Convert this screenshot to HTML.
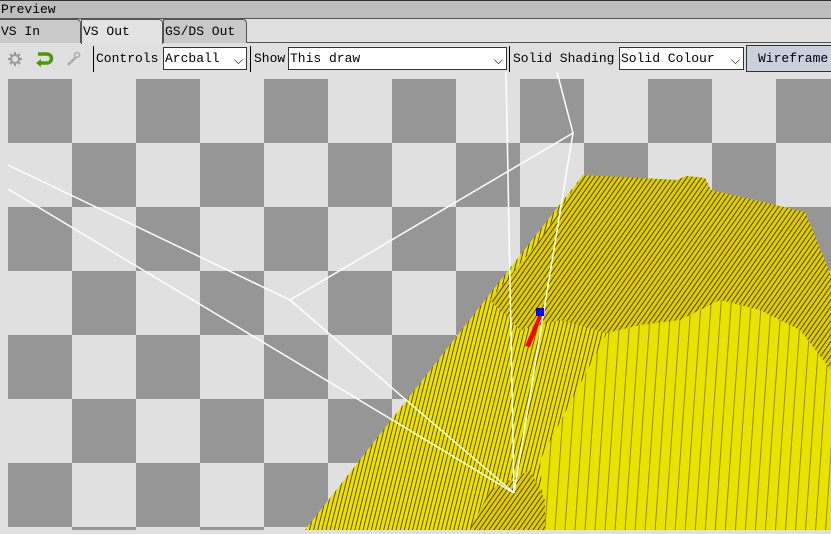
<!DOCTYPE html>
<html><head><meta charset="utf-8"><style>
*{margin:0;padding:0;box-sizing:border-box}
body{width:831px;height:534px;overflow:hidden;background:#e0e0e0;font-family:"Liberation Mono","Noto Sans CJK SC",monospace;font-size:13px;color:#000;position:relative}
.abs{position:absolute}
.title{left:0;top:0;width:831px;height:19px;background:#bdbdbd;border-top:1px solid #333;border-bottom:1px solid #555;line-height:17px;padding-left:1px}
.tab{top:19px;height:24px;line-height:24px;padding-left:1px;border:1px solid #555;border-bottom:none;border-top-right-radius:4px;background:#c9c9c9}
.sel{background:#e3e3e3}
.sep{top:46px;width:1px;height:26px;background:#000}
.lbl{top:50px;line-height:18px}
.combo{top:47px;height:23px;border:1px solid #333;background:#fff;line-height:21px;padding-left:1px}
.combo i{position:absolute;right:3px;top:3px;font-style:normal;font-size:12px}
</style></head><body>
<div class="abs title">Preview</div>
<div class="abs" style="left:0;top:42px;width:831px;height:1px;background:#555"></div>
<div class="abs tab" style="left:-1px;width:82px">VS In</div>
<div class="abs tab sel" style="left:81px;width:82px;height:25px">VS Out</div>
<div class="abs tab" style="left:163px;width:84px">GS/DS Out</div>
<svg class="abs" style="left:6px;top:50px" width="80" height="18" viewBox="0 0 80 18">
<g fill="none" stroke="#999" stroke-width="2"><circle cx="9" cy="9" r="4"/><path d="M9 2v3M9 13v3M2 9h3M13 9h3M4 4l2 2M12 12l2 2M4 14l2-2M12 6l2-2"/></g>
<path d="M32 4h9a4 4 0 0 1 0 9h-7" fill="none" stroke="#4a9a00" stroke-width="3.5"/><path d="M35 9l-5 4 5 4z" fill="#4a9a00"/>
<path d="M62 15l8-8" stroke="#aaa" stroke-width="2.5"/><circle cx="71" cy="5" r="2.5" fill="none" stroke="#aaa" stroke-width="1.5"/>
</svg>
<div class="abs sep" style="left:93px"></div>
<div class="abs lbl" style="left:96px">Controls</div>
<div class="abs combo" style="left:163px;width:84px">Arcball<i>⌵</i></div>
<div class="abs sep" style="left:250px"></div>
<div class="abs lbl" style="left:254px">Show</div>
<div class="abs combo" style="left:288px;width:219px">This draw<i>⌵</i></div>
<div class="abs sep" style="left:509px"></div>
<div class="abs lbl" style="left:513px">Solid Shading</div>
<div class="abs combo" style="left:619px;width:125px">Solid Colour<i>⌵</i></div>
<div class="abs" style="left:746px;top:45px;width:90px;height:27px;border:1px solid #333;background:#c9d1dd;line-height:25px;padding-left:11px">Wireframe</div>
<svg class="abs" style="left:0;top:72px" width="831" height="462" viewBox="0 72 831 462">
<defs>
<pattern id="ck" x="8" y="79" width="128" height="128" patternUnits="userSpaceOnUse">
<rect width="128" height="128" fill="#e0e0e0"/><rect width="64" height="64" fill="#969696"/><rect x="64" y="64" width="64" height="64" fill="#969696"/></pattern>
<pattern id="vl" width="4" height="10" patternUnits="userSpaceOnUse" patternTransform="rotate(14)"><rect width="4" height="10" fill="#e8e400"/><rect width="1" height="10" fill="#6a4a00"/></pattern>
<pattern id="dn" width="4" height="4" patternUnits="userSpaceOnUse" patternTransform="rotate(35)"><rect width="4" height="4" fill="#d8d000"/><rect width="1" height="4" fill="#6a3a00"/></pattern>
<pattern id="sl" width="10" height="10" patternUnits="userSpaceOnUse" patternTransform="rotate(4)"><rect width="10" height="10" fill="#e8e400"/><rect width="1" height="10" fill="#9a8a00"/></pattern>
</defs>
<rect x="8" y="79" width="823" height="451" fill="url(#ck)"/>
<polygon points="583,175 677,180 686,176 705,178 711,190 805,212 831,275 831,530 305,530" fill="url(#vl)"/>
<polygon points="583,175 677,180 686,176 705,178 711,190 805,212 831,275 831,370 800,330 760,310 720,300 680,320 640,325 607,333 560,320 520,330 490,300 540,240" fill="url(#dn)"/>
<polygon points="607,333 640,325 680,320 720,300 760,310 800,330 831,370 831,530 545,530 540,460" fill="url(#sl)"/>
<polygon points="470,530 490,490 530,470 545,500 545,530" fill="url(#dn)"/>
<g stroke="#fff" stroke-width="1.5" fill="none">
<polyline points="8,165 290,300 573,133 557,72"/>
<line x1="8" y1="189" x2="514" y2="493"/>
<line x1="290" y1="300" x2="514" y2="493"/>
<line x1="506" y1="72" x2="514" y2="493"/>
<line x1="573" y1="133" x2="514" y2="493"/>
</g>
<polygon points="538,316 542,316 530,347 525,346" fill="#f00"/>
<rect x="536" y="308" width="8" height="8" fill="#00f"/>
</svg>
</body></html>
